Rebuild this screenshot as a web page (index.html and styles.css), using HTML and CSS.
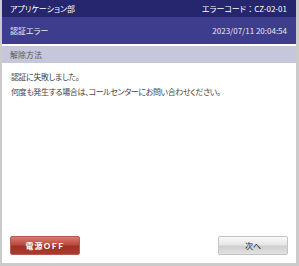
FILE: index.html
```html
<!DOCTYPE html>
<html lang="ja">
<head>
    <meta charset="UTF-8">
    <meta name="viewport" content="width=device-width, initial-scale=1.0">
    <title>認証エラー</title>
    <link rel="stylesheet" href="styles.css">
</head>
<body>
    <div class="frame">
        <div class="bar-top">
            <span>アプリケーション部</span>
            <span class="code">エラーコード<span class="colon">：</span>CZ-02-01</span>
        </div>
        <div class="bar-title">
            <span>認証エラー</span>
            <span class="stamp">2023/07/11 20:04:54</span>
        </div>
        <div class="section-head">解除方法</div>
        <div class="message">
            <p>認証に失敗しました。</p>
            <p>何度も発生する場合は、コールセンターにお問い合わせください。</p>
        </div>
        <div class="actions">
            <button class="btn btn-power">電源ＯＦＦ</button>
            <button class="btn btn-next">次へ</button>
        </div>
    </div>
</body>
</html>
```
FILE: styles.css
```css
body {
    margin: 0;
    font-family: "Noto Sans CJK JP", "Noto Sans", sans-serif;
    font-size: 8px;
    font-feature-settings: "palt";
    background: #fff;
}
.frame {
    height: 266px;
    box-sizing: border-box;
    border-left: 2px solid #cbcbcb;
    border-right: 3px solid #cbcbcb;
    border-bottom: 3px solid #cbcbcb;
    display: flex;
    flex-direction: column;
}
.bar-top, .bar-title {
    display: flex;
    justify-content: space-between;
    align-items: center;
    padding: 0 9px 0 8px;
    color: #fff;
}
.bar-top {
    height: 17px;
    background: #26266e;
}
.bar-title {
    height: 27px;
    background: #3d3c8d;
    color: #e8e8f4;
}
.colon {
    font-feature-settings: normal;
}
.section-head {
    height: 17px;
    line-height: 17px;
    margin-top: 2px;
    padding: 0 8px;
    background: #c7c7db;
    color: #555;
}
.message {
    flex: 1;
    padding: 6px 9px;
    color: #444;
    letter-spacing: -0.4px;
}
.message p {
    margin: 0;
    line-height: 15px;
}
.actions {
    display: flex;
    justify-content: space-between;
    padding: 0 8px 8px;
}
.btn {
    width: 70px;
    height: 19px;
    border-radius: 2px;
    font-family: inherit;
    font-size: 8px;
    font-feature-settings: "palt";
    padding: 0;
    cursor: pointer;
}
.btn-power {
    border: 1px solid #b65a50;
    background: linear-gradient(to bottom, #d87a70, #bd4a3e 45%, #9e3125 55%, #a93a2e);
    color: #fff;
    font-weight: bold;
    letter-spacing: 1px;
}
.btn-next {
    border: 1px solid #c4c4c4;
    background: linear-gradient(to bottom, #fafafa, #e6e6e6 45%, #cfcfcf 55%, #e2e2e2);
    color: #222;
}
```
